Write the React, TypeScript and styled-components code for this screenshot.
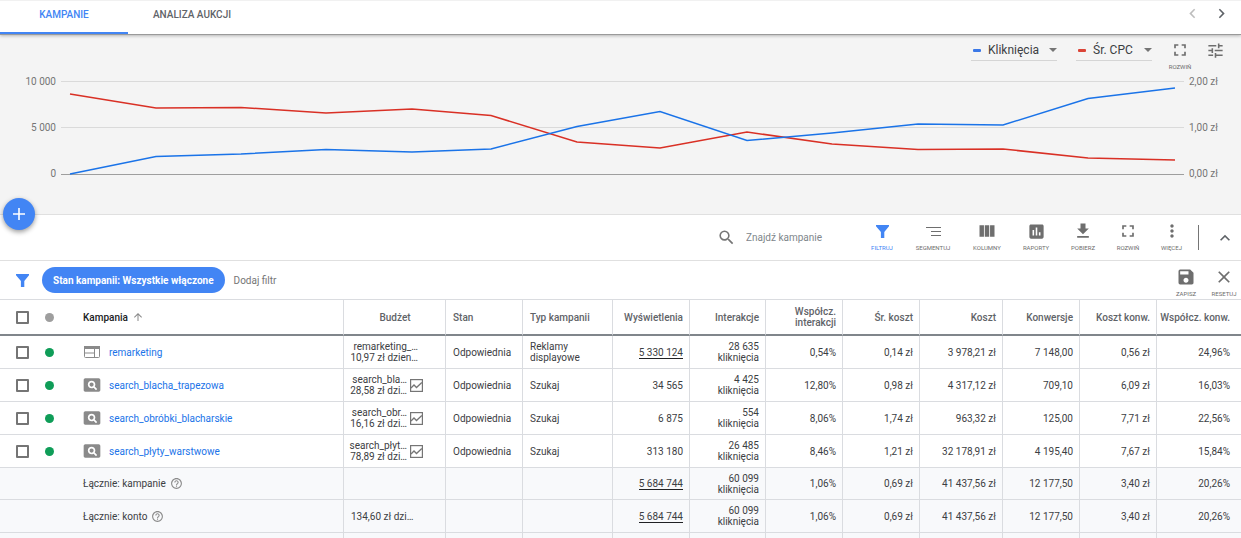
import React from "react";
import styled, { createGlobalStyle } from "styled-components";
import {
  MdArrowUpward,
  MdAssessment,
  MdChevronLeft,
  MdChevronRight,
  MdClose,
  MdExpandLess,
  MdFileDownload,
  MdFullscreen,
  MdHelpOutline,
  MdMoreVert,
  MdPageview,
  MdSave,
  MdSearch,
  MdTune,
  MdViewColumn,
} from "react-icons/md";

const GlobalStyle = createGlobalStyle`
  *, *::before, *::after { box-sizing: border-box; }
  body {
    margin: 0;
    background: #fff;
    color: #3c4043;
    font: 400 10px/11px Roboto, "Noto Sans", sans-serif;
  }
  button, input, select { font: inherit; color: inherit; }
  button { border: 0; padding: 0; background: none; cursor: pointer; }
  svg { display: block; flex: none; }
`;

/* ---------- Tabs ---------- */

const TabBar = styled.nav`
  display: flex;
  position: relative;
  height: 35px;
  border-top: 1px solid #f1f1f1;
  border-bottom: 1px solid #9a9a9a;
  box-shadow: 0 1px 3px rgba(0, 0, 0, 0.25);
`;

const Tab = styled.a<{ $active?: boolean }>`
  display: flex;
  align-items: center;
  justify-content: center;
  width: 128px;
  padding-bottom: ${(p) => (p.$active ? "5px" : "7px")};
  border-bottom: ${(p) => (p.$active ? "2px solid #4285f4" : "0")};
  color: ${(p) => (p.$active ? "#4285f4" : "#5f6368")};
  font-weight: 500;
  text-decoration: none;
`;

const TabArrows = styled.div`
  display: flex;
  align-items: center;
  gap: 10px;
  margin-left: auto;
  padding: 0 10px 8px 0;
`;

const ArrowButton = styled.button`
  color: #5f6368;
  &:disabled { color: #bdbdbd; }
`;

/* ---------- Chart ---------- */

const ChartPanel = styled.section`
  padding-bottom: 32px;
  background: #f4f4f4;
  border-bottom: 1px solid #e0e0e0;
`;

const ChartControls = styled.div`
  display: flex;
  justify-content: flex-end;
  align-items: flex-start;
  height: 38px;
  padding-top: 5px;
`;

const Metric = styled.label<{ $width: number }>`
  display: flex;
  align-items: center;
  width: ${(p) => p.$width}px;
  height: 21px;
  margin-right: 19px;
  padding-left: 2px;
  border-bottom: 1px solid #d5d5d5;
`;

const Swatch = styled.span<{ $color: string }>`
  flex: none;
  width: 8px;
  height: 3px;
  margin-right: 7px;
  border-radius: 1px;
  background: ${(p) => p.$color};
`;

const MetricSelect = styled.select`
  flex: 1;
  min-width: 0;
  padding: 0;
  border: 0;
  background: none;
  appearance: none;
  font-size: 12px;
  line-height: 16px;
`;

const Plot = styled.div`
  display: grid;
  grid-template-columns: 56px 1fr 52px;
  column-gap: 5px;
  height: 109px;
`;

const Axis = styled.div<{ $side: "left" | "right" }>`
  display: flex;
  flex-direction: column;
  justify-content: space-between;
  padding-top: 1px;
  color: #757575;
  line-height: 16px;
  text-align: ${(p) => (p.$side === "left" ? "right" : "left")};
`;

const Lines = styled.svg`
  width: 100%;
  height: 109px;
  path { fill: none; vector-effect: non-scaling-stroke; }
`;

/* ---------- Toolbars ---------- */

const Toolbar = styled.div`
  display: flex;
  position: relative;
  justify-content: flex-end;
  height: 46px;
  padding-right: 6px;
  border-bottom: 1px solid #e0e0e0;
`;

const AddButton = styled.button`
  display: flex;
  align-items: center;
  justify-content: center;
  position: absolute;
  left: 3px;
  top: -17px;
  width: 32px;
  height: 32px;
  border-radius: 50%;
  background: #4285f4;
  box-shadow: 0 2px 5px rgba(0, 0, 0, 0.4);
`;

const SearchBox = styled.label`
  display: flex;
  align-items: center;
  gap: 10px;
  margin-right: 13px;
  color: #757575;
`;

const SearchInput = styled.input`
  width: 110px;
  padding: 0;
  border: 0;
  outline: 0;
  background: none;
  &::placeholder { color: #80868b; opacity: 1; }
`;

const Tools = styled.div`
  display: flex;
  gap: 18px;
  padding-top: 6px;
`;

const ToolButton = styled.button<{ $active?: boolean; $width?: number }>`
  display: flex;
  flex-direction: column;
  align-items: center;
  gap: 3px;
  width: ${(p) => p.$width ?? 26}px;
  height: 31px;
  color: ${(p) => (p.$active ? "#4285f4" : "#6e6e6e")};
  font-size: 6px;
  line-height: 8px;
  text-transform: uppercase;
  white-space: nowrap;
`;

const IconSlot = styled.span`
  display: flex;
  align-items: center;
  justify-content: center;
  height: 20px;
`;

const Divider = styled.span`
  width: 1px;
  height: 25px;
  margin: 10px 16px 0 14px;
  background: #757575;
`;

const CollapseButton = styled.button`
  width: 20px;
  color: #5f6368;
`;

const FilterBar = styled.div`
  display: flex;
  align-items: center;
  height: 39px;
  padding: 0 3px 0 16px;
  border-bottom: 1px solid #dadce0;
`;

const FilterChip = styled.button`
  height: 26px;
  margin: 0 9px 0 13px;
  padding: 0 11px;
  border-radius: 13px;
  background: #4285f4;
  color: #fff;
  font-weight: 700;
`;

const AddFilter = styled.button`
  color: #757575;
`;

const FilterActions = styled.div`
  display: flex;
  gap: 10px;
  align-self: flex-start;
  margin-left: auto;
  padding-top: 6px;
`;

/* ---------- Table ---------- */

const Table = styled.table`
  width: 100%;
  table-layout: fixed;
  border-collapse: separate;
  border-spacing: 0;
`;

const HeadCell = styled.th<{ $align?: string; $rule?: boolean }>`
  height: 36px;
  padding: 0 6px 0 7px;
  border-right: ${(p) => (p.$rule === false ? 0 : 1)}px solid #dadce0;
  border-bottom: 2px solid #80868b;
  color: #5f6368;
  font-weight: 500;
  text-align: ${(p) => p.$align ?? "right"};
  white-space: pre-line;
  &:last-child {
    padding: 0 11px 0 0;
    border-right: 0;
    white-space: nowrap;
  }
`;

const Cell = styled.td<{ $align?: string; $rule?: boolean }>`
  padding: 0 6px 0 7px;
  border-right: ${(p) => (p.$rule === false ? 0 : 1)}px solid #dadce0;
  border-bottom: 1px solid #dadce0;
  text-align: ${(p) => p.$align ?? "right"};
  &:last-child { padding-right: 11px; border-right: 0; }
  tr:last-child > & { border-bottom: 0; }
`;

const Row = styled.tr<{ $summary?: boolean; $height?: number }>`
  height: ${(p) => p.$height ?? 33}px;
  background: ${(p) => (p.$summary ? "#f8f9fb" : "#fff")};
`;

const Checkbox = styled.input`
  display: block;
  width: 13px;
  height: 13px;
  margin: 0 0 0 9px;
  border: 2px solid #757575;
  border-radius: 1px;
  appearance: none;
  &:checked { background: #4285f4; }
`;

const StatusDot = styled.span<{ $color: string }>`
  display: block;
  width: 9px;
  height: 9px;
  border-radius: 50%;
  background: ${(p) => p.$color};
`;

const NameLine = styled.div<{ $gap?: number }>`
  display: flex;
  align-items: center;
  gap: ${(p) => p.$gap ?? 7}px;
  padding-left: 13px;
  color: #8a8a8a;
`;

const NameLabel = styled.span`
  padding-left: 1px;
  color: #3c4043;
`;

const SortLabel = styled(NameLabel)`
  color: #202124;
`;

const CampaignLink = styled.a`
  color: #1a73e8;
  text-decoration: none;
`;

const Budget = styled.div<{ $right: number }>`
  display: flex;
  justify-content: flex-end;
  align-items: center;
  gap: 3px;
  padding-right: ${(p) => p.$right}px;
  color: #757575;
`;

const BudgetText = styled.span`
  color: #3c4043;
  white-space: pre;
`;

const Underlined = styled.span`
  border-bottom: 1px solid #202124;
`;

const Lined = styled.span`
  white-space: pre-line;
`;

/* ---------- Icons ---------- */

const Funnel = () => (
  <svg width="13" height="13" viewBox="0 0 13 13" fill="#4285f4">
    <path d="M0 0H13V1.2L8.3 7V13H4.9V7L0 1.2Z" />
  </svg>
);

const SegmentIcon = () => (
  <svg width="15" height="11" viewBox="0 0 15 11" fill="currentColor">
    <path d="M0 1H15V2H0ZM5 5H15V6H5ZM5 9H15V10H5Z" />
  </svg>
);

const DisplayIcon = () => (
  <svg width="20" height="14" viewBox="0 0 20 14" fill="none" stroke="currentColor">
    <rect x="2.5" y="1.5" width="15" height="11" rx="1" />
    <path d="M2 2.5H18" strokeWidth="3" />
    <path d="M3 8H12M12.5 4V12" />
  </svg>
);

const BudgetChartIcon = () => (
  <svg width="13" height="13" viewBox="0 0 13 13" fill="none" stroke="currentColor">
    <rect x="0.6" y="0.6" width="11.8" height="11.8" strokeWidth="1.2" />
    <path d="M1 9L4 6L6.5 8.5L11.8 3.5" strokeWidth="1.3" />
  </svg>
);

const Caret = () => (
  <svg width="8" height="4" viewBox="0 0 8 4" fill="#757575">
    <path d="M0 0H8L4 4Z" />
  </svg>
);

const Plus = () => (
  <svg width="12" height="12" viewBox="0 0 12 12" fill="#fff">
    <path d="M5.2 0H6.8V5.2H12V6.8H6.8V12H5.2V6.8H0V5.2H5.2Z" />
  </svg>
);

/* ---------- Data ---------- */

const xs = [9, 95, 180, 265, 351, 430, 516, 599, 686, 771, 857, 942, 1027, 1114];
const clicks = [101, 83.5, 81, 76.5, 79, 76, 53.5, 38.5, 67.5, 60, 51, 52, 25.5, 15];
const cpc = [21, 35, 34.5, 40, 36, 42.5, 69, 75, 59, 71, 76.5, 76, 85, 87];
const toPath = (ys: number[]) => ys.map((y, i) => `${i ? "L" : "M"}${xs[i]} ${y}`).join("");

const columns = [
  { label: "Budżet", width: 102, align: "center" },
  { label: "Stan", width: 77, align: "left" },
  { label: "Typ kampanii", width: 90, align: "left" },
  { label: "Wyświetlenia", width: 77 },
  { label: "Interakcje", width: 76 },
  { label: "Współcz.\ninterakcji", width: 77 },
  { label: "Śr. koszt", width: 77 },
  { label: "Koszt", width: 83 },
  { label: "Konwersje", width: 77 },
  { label: "Koszt konw.", width: 77 },
  { label: "Współcz. konw.", width: 84 },
];

const campaigns = [
  { name: "remarketing", budget: "remarketing_…\n10,97 zł dzien…", type: "Reklamy displayowe", views: "5 330 124", linked: true, clicks: "28 635", rest: ["0,54%", "0,14 zł", "3 978,21 zł", "7 148,00", "0,56 zł", "24,96%"] },
  { name: "search_blacha_trapezowa", budget: "search_bla…\n28,58 zł dzi…", type: "Szukaj", views: "34 565", clicks: "4 425", rest: ["12,80%", "0,98 zł", "4 317,12 zł", "709,10", "6,09 zł", "16,03%"] },
  { name: "search_obróbki_blacharskie", budget: "search_obr…\n16,16 zł dzi…", type: "Szukaj", views: "6 875", clicks: "554", rest: ["8,06%", "1,74 zł", "963,32 zł", "125,00", "7,71 zł", "22,56%"] },
  { name: "search_płyty_warstwowe", budget: "search_płyt…\n78,89 zł dzi…", type: "Szukaj", views: "313 180", clicks: "26 485", rest: ["8,46%", "1,21 zł", "32 178,91 zł", "4 195,40", "7,67 zł", "15,84%"] },
];

const totals = [
  { name: "Łącznie: kampanie", budget: "", height: 32 },
  { name: "Łącznie: konto", budget: "134,60 zł dzi…", height: 33 },
];
const totalValues = ["1,06%", "0,69 zł", "41 437,56 zł", "12 177,50", "3,40 zł", "20,26%"];

const tools = [
  { label: "Filtruj", width: 26, icon: <Funnel />, active: true },
  { label: "Segmentuj", width: 40, icon: <SegmentIcon /> },
  { label: "Kolumny", width: 32, icon: <MdViewColumn size={20} /> },
  { label: "Raporty", width: 30, icon: <MdAssessment size={19} /> },
  { label: "Pobierz", width: 28, icon: <MdFileDownload size={20} /> },
  { label: "Rozwiń", width: 26, icon: <MdFullscreen size={20} /> },
  { label: "Więcej", width: 25, icon: <MdMoreVert size={20} /> },
];

export default function App() {
  return (
    <>
      <GlobalStyle />
      <TabBar>
        <Tab href="#kampanie" $active>KAMPANIE</Tab>
        <Tab href="#aukcje">ANALIZA AUKCJI</Tab>
        <TabArrows>
          <ArrowButton disabled aria-label="Poprzednia"><MdChevronLeft size={19} /></ArrowButton>
          <ArrowButton aria-label="Następna"><MdChevronRight size={19} /></ArrowButton>
        </TabArrows>
      </TabBar>

      <ChartPanel>
        <ChartControls>
          <Metric $width={86}>
            <Swatch $color="#3b78e7" />
            <MetricSelect aria-label="Pierwszy wskaźnik"><option>Kliknięcia</option></MetricSelect>
            <Caret />
          </Metric>
          <Metric $width={76}>
            <Swatch $color="#db4437" />
            <MetricSelect aria-label="Drugi wskaźnik"><option>Śr. CPC</option></MetricSelect>
            <Caret />
          </Metric>
          <ToolButton $width={18}>
            <IconSlot><MdFullscreen size={20} /></IconSlot>
            Rozwiń
          </ToolButton>
          <ToolButton $width={52} aria-label="Ustawienia wykresu">
            <IconSlot><MdTune size={19} /></IconSlot>
          </ToolButton>
        </ChartControls>
        <Plot>
          <Axis $side="left"><span>10 000</span><span>5 000</span><span>0</span></Axis>
          <Lines viewBox="0 0 1123 109" preserveAspectRatio="none" role="img" aria-label="Kliknięcia i śr. CPC">
            <path d="M0 8.5H1123M0 54.5H1123" stroke="#dadada" />
            <path d="M0 101.5H1123" stroke="#9e9e9e" />
            <path d={toPath(cpc)} stroke="#d93025" strokeWidth="1.5" />
            <path d={toPath(clicks)} stroke="#1a73e8" strokeWidth="1.5" />
          </Lines>
          <Axis $side="right"><span>2,00 zł</span><span>1,00 zł</span><span>0,00 zł</span></Axis>
        </Plot>
      </ChartPanel>

      <Toolbar>
        <AddButton aria-label="Dodaj"><Plus /></AddButton>
        <SearchBox>
          <MdSearch size={19} />
          <SearchInput type="text" placeholder="Znajdź kampanie" aria-label="Znajdź kampanie" />
        </SearchBox>
        <Tools>
          {tools.map((t) => (
            <ToolButton key={t.label} $width={t.width} $active={t.active}>
              <IconSlot>{t.icon}</IconSlot>
              {t.label}
            </ToolButton>
          ))}
        </Tools>
        <Divider />
        <CollapseButton aria-label="Zwiń"><MdExpandLess size={20} /></CollapseButton>
      </Toolbar>

      <FilterBar>
        <Funnel />
        <FilterChip>Stan kampanii: Wszystkie włączone</FilterChip>
        <AddFilter>Dodaj filtr</AddFilter>
        <FilterActions>
          <ToolButton $width={28}>
            <IconSlot><MdSave size={20} /></IconSlot>
            Zapisz
          </ToolButton>
          <ToolButton $width={28}>
            <IconSlot><MdClose size={20} /></IconSlot>
            Resetuj
          </ToolButton>
        </FilterActions>
      </FilterBar>

      <Table>
        <colgroup>
          <col style={{ width: 38 }} />
          <col style={{ width: 24 }} />
          <col />
          {columns.map((c) => <col key={c.label} style={{ width: c.width }} />)}
        </colgroup>
        <thead>
          <tr>
            <HeadCell $rule={false}><Checkbox type="checkbox" aria-label="Zaznacz wszystkie" /></HeadCell>
            <HeadCell $rule={false}><StatusDot $color="#9e9e9e" /></HeadCell>
            <HeadCell $align="left">
              <NameLine $gap={4}>
                <SortLabel>Kampania</SortLabel>
                <MdArrowUpward size={12} />
              </NameLine>
            </HeadCell>
            {columns.map((c) => <HeadCell key={c.label} $align={c.align}>{c.label}</HeadCell>)}
          </tr>
        </thead>
        <tbody>
          {campaigns.map((c) => (
            <Row key={c.name}>
              <Cell $rule={false}><Checkbox type="checkbox" aria-label={c.name} /></Cell>
              <Cell $rule={false}><StatusDot $color="#0f9d58" /></Cell>
              <Cell $align="left">
                <NameLine>
                  {c.linked ? <DisplayIcon /> : <MdPageview size={20} />}
                  <CampaignLink href="#kampania">{c.name}</CampaignLink>
                </NameLine>
              </Cell>
              <Cell>
                <Budget $right={c.linked ? 21 : 16}>
                  <BudgetText>{c.budget}</BudgetText>
                  {!c.linked && <BudgetChartIcon />}
                </Budget>
              </Cell>
              <Cell $align="left">Odpowiednia</Cell>
              <Cell $align="left">{c.type}</Cell>
              <Cell>{c.linked ? <Underlined>{c.views}</Underlined> : c.views}</Cell>
              <Cell><Lined>{`${c.clicks}\nkliknięcia`}</Lined></Cell>
              {c.rest.map((v, i) => <Cell key={i}>{v}</Cell>)}
            </Row>
          ))}
          {totals.map((t) => (
            <Row key={t.name} $summary $height={t.height}>
              <Cell $rule={false} />
              <Cell $rule={false} />
              <Cell $align="left">
                <NameLine $gap={4}>
                  <NameLabel>{t.name}</NameLabel>
                  <MdHelpOutline size={13} />
                </NameLine>
              </Cell>
              <Cell $align="left">{t.budget}</Cell>
              <Cell />
              <Cell />
              <Cell><Underlined>5 684 744</Underlined></Cell>
              <Cell><Lined>{"60 099\nkliknięcia"}</Lined></Cell>
              {totalValues.map((v) => <Cell key={v}>{v}</Cell>)}
            </Row>
          ))}
          <Row $summary $height={5}>
            <Cell $rule={false} />
            <Cell $rule={false} />
            <Cell />
            {columns.map((c) => <Cell key={c.label} />)}
          </Row>
        </tbody>
      </Table>
    </>
  );
}
